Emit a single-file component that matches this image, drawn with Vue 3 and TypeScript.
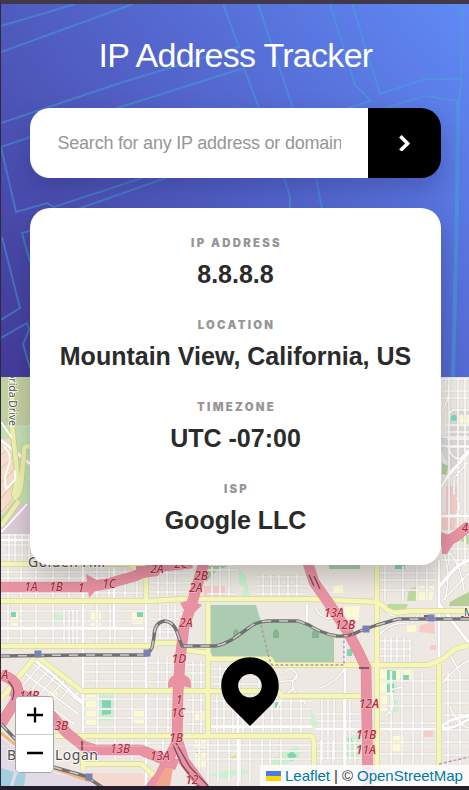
<script setup lang="ts">
import { ref } from 'vue'

interface Detail { label: string; value: string }
interface MapLabel { t: string; x: number; y: number }

const query = ref('')
const details: Detail[] = [
  { label: 'IP Address', value: '8.8.8.8' },
  { label: 'Location', value: 'Mountain View, California, US' },
  { label: 'Timezone', value: 'UTC -07:00' },
  { label: 'ISP', value: 'Google LLC' },
]

/* Streets of a rectangular block: verticals at xs, horizontals at ys */
const grid = (x0: number, y0: number, x1: number, y1: number, xs: number[], ys: number[]): string =>
  xs.map((x) => `M${x} ${y0}V${y1}`).join('') + ys.map((y) => `M${x0} ${y}H${x1}`).join('')

const streets: string = [
  grid(1, 534, 32, 563, [9, 15, 22, 29], [535, 545, 555]),
  grid(1, 567, 146, 600, [8, 21, 36, 53, 69, 97, 109, 125, 137], [572, 578, 593]),
  grid(1, 603, 146, 645, [8, 21, 36, 53, 97, 110], [611, 621, 629, 638]),
  grid(60, 610, 82, 645, [64, 69, 73, 77], [611, 638]),
  grid(113, 628, 175, 645, [115, 132, 146], [629, 638]),
  grid(83, 659, 146, 690, [97, 115, 132], [664, 672, 681]),
  grid(83, 694, 176, 733, [98, 115, 132, 146, 157, 168], [699, 709, 718, 727]),
  grid(84, 739, 176, 761, [97, 115, 132, 146, 163], [743, 756]),
  grid(150, 567, 190, 600, [158, 167, 175], [573, 583, 592]),
  grid(150, 604, 180, 638, [160, 168, 175], [611, 619, 632]),
  grid(148, 657, 175, 690, [158, 167], [663, 672, 682]),
  grid(186, 661, 208, 733, [193, 201], [665, 673, 682, 700, 712, 724]),
  grid(211, 665, 270, 689, [220, 229, 239, 259], [669, 677, 684]),
  grid(211, 694, 312, 733, [217, 224, 233, 243, 252, 263, 272, 281, 291, 301], [701, 709, 718, 726]),
  grid(188, 738, 311, 782, [199, 208, 218, 229, 240, 250, 262, 270, 281], [745, 751, 759]),
  grid(255, 575, 306, 600, [263, 271, 279, 288, 297], [577, 586, 594]),
  grid(207, 567, 236, 598, [212, 220, 229], [570, 594]),
  grid(316, 700, 361, 760, [322, 328, 334, 344, 350], [714, 721, 729, 743, 751]),
  grid(315, 740, 365, 786, [321, 333, 344, 355], [758, 766, 774]),
  grid(378, 637, 411, 663, [385, 391, 397, 404], [641, 649, 656]),
  grid(380, 671, 437, 764, [391, 402, 413, 422], [681, 694, 706, 723, 742, 754]),
  grid(378, 566, 435, 601, [385, 403, 417, 427], [573, 580, 590]),
  grid(443, 671, 469, 764, [448, 460], [680, 691, 703, 715, 730, 742, 755]),
  grid(441, 378, 469, 565, [449, 458, 465], [379, 391, 398, 437, 446, 549, 560]),
  grid(447, 420, 469, 451, [], [425, 432, 439, 447]),
  'M449 451V418Q449 409 456 410H469M442 412Q451 396 448 385M449 447Q450 458 460 459L469 449M449 472L462 460M455 477L468 462M454 480V495M456 516Q462 508 457 498',
  'M445 556Q451 576 445 600M450 553Q461 566 464 590M439 586Q453 565 469 559M442 601L469 573',
  'M284 673Q291 665 296 673T286 681L274 682M297 675Q285 687 306 704M293 689Q280 697 277 710M320 688Q339 681 345 667M386 715Q397 710 391 690L402 687M441 684Q457 666 469 660M449 653L460 673M450 707Q457 725 469 728',
  'M315 607Q321 621 337 618M383 607Q392 620 396 613M378 637Q390 621 407 624M410 666V639M412 623L423 608',
].join('')

const diagonals: string = [0, 1, 2, 3, 4, 5].map((i) => `M${3 + i * 14} ${709 - i * 2}L${42 + i * 8} ${663 + i * 5}`).join('')
  + [0, 1, 2, 3].map((i) => `M${31 - i * 8} ${662 + i * 10}L${82 - i * 4} ${704 + i * 10}`).join('')

const mainStreets = 'M83 567V733M146 603V786M114 567V628M345 640V786M439 560V662M439 375V535M1 628H144M315 729H440Q455 729 469 719M439 587L458 566L469 560M439 729Q449 718 469 716M238 664V786M307 605V663M211 727H312M82 702L50 672L35 660M439 490L448 476L469 452M439 516H469M439 604L469 643M1 440L30 464M1 540H31'

const majors: string[] = [
  'M1 564H135L149 566', 'M1 601H150L183 599H309L378 602L386 609Q393 614 402 612L413 611H469',
  'M1 646H150L158 643H181', 'M185 650L208 653L211 659H270L274 665H428L443 659L455 649L469 645',
  'M38 657L82 691H278L282 696H369', 'M55 736H312Q314 737 314 747V786', 'M83 737V770M83 764H141L160 781',
  'M35 657L17 679L1 699', 'M208 603V735', 'M377 565V786', 'M439 664V786', 'M146 600V579Q143 572 129 565',
]

const motorways = [
  'M1 587H87L107 584L135 576L155 567L192 563', 'M204 562L192 603L184 627L180 660L178 693L177 742L160 776L149 790',
  'M307 560L314 582L328 602L348 632L359 653L366 668L367 727L368 790', 'M1 675Q20 680 18 697L1 724',
  'M11 691L28 697L50 714L67 733L83 746L96 750H141L177 765', 'M178 742L184 761L204 788', 'M441 544L455 537L469 526',
]

const rails = [
  'M1 656L80 655H147L152 648L154 637Q154 623 164 621Q174 621 178 635L182 646H215Q223 645 233 639L250 627Q256 622 267 621H298L309 625Q320 633 337 636Q349 637 360 631L377 625L398 619H469',
  'M1 724L20 744L53 767L85 776L105 789',
]

const shields: MapLabel[] = [
  { t: '1A', x: 31, y: 591 }, { t: '1B', x: 56, y: 591 }, { t: '1', x: 81, y: 592 }, { t: '1C', x: 109, y: 588 },
  { t: '2A', x: 157, y: 573 }, { t: '2C', x: 181, y: 568 }, { t: '2B', x: 201, y: 580 }, { t: '2A', x: 196, y: 592 },
  { t: '2A', x: 186, y: 627 }, { t: '1D', x: 179, y: 663 }, { t: '1', x: 179, y: 704 }, { t: '1C', x: 178, y: 717 },
  { t: '1B', x: 176, y: 742 }, { t: '13A', x: 160, y: 760 }, { t: '12', x: 192, y: 784 }, { t: 'A', x: 5, y: 679 },
  { t: '14B', x: 29, y: 700 }, { t: '13B', x: 58, y: 730 }, { t: '13B', x: 120, y: 753 }, { t: '13A', x: 334, y: 617 },
  { t: '12B', x: 345, y: 629 }, { t: '12A', x: 369, y: 708 }, { t: '11B', x: 366, y: 739 }, { t: '11A', x: 366, y: 754 },
  { t: '4', x: 465, y: 532 },
]

const stations: [number, number][] = [[38, 654], [147, 653], [366, 629], [431, 618], [89, 777]]
</script>

<template>
  <main class="page">
    <header class="hero">
      <svg class="pattern" viewBox="1 4 468 373" aria-hidden="true">
        <g fill="none" stroke="#43a6d9" stroke-opacity=".48" stroke-width="2">
          <path d="M1 26L75 4M1 52L133 4M223 4L239 47L120 83L1 123M117 108L244 68L259 108" />
          <path d="M30 137L1 147L16 212L47 203L54 207L142 178M78 209L166 178M30 231L22 233L30 262M2 237L20 308L1 320M1 338L27 323L29 330L23 344L30 368" />
          <path d="M258 4L293 108M330 4L355 85L371 101L342 110M352 4L380 94L425 79H461M385 108L425 96L460 101M284 178L290 197V209M316 178L322 209M457 4L462 19L464 4" />
          <path d="M462 18L461 80L459 101" />
          <path d="M458 101L457 210L453 377" stroke-width="4" />
        </g>
      </svg>
      <div class="content">
        <h1>IP Address Tracker</h1>
        <form class="search" @submit.prevent>
          <div class="field"><input v-model="query" type="text" placeholder="Search for any IP address or domain" /></div>
          <button type="submit" aria-label="Search">
            <svg width="13.2" height="16.8" viewBox="0 0 11 14"><path d="M2 1l6 6-6 6" fill="none" stroke="#fff" stroke-width="3" /></svg>
          </button>
        </form>
        <dl class="card">
          <div v-for="d in details" :key="d.label" class="item">
            <dt>{{ d.label }}</dt>
            <dd>{{ d.value }}</dd>
          </div>
        </dl>
      </div>
    </header>

    <section class="map">
      <svg class="tiles" viewBox="1 377 468 409" aria-hidden="true">
        <rect x="1" y="377" width="468" height="409" fill="#ede9e2" />
        <path d="M449 411H469V450L452 472L441 450V436H449Z" fill="#dad8d8" />
        <path d="M1 377H31V535H1Z" fill="#c4dfb4" />
        <path d="M1 377H31V426H1Z" fill="#c2cfa1" />
        <path d="M1 440L10 438L17 448V497L1 516Z" fill="#f6ddc7" />
        <path d="M1 455L16 440M1 469L17 453M1 483L17 467M1 498L17 481M1 512L17 495" stroke="#efbba6" />
        <path d="M1 520L20 503L31 504V534H1Z" fill="#dccbd9" />
        <path d="M204 566H228L216 571L206 582Z" fill="#a8ce9c" />
        <path d="M239 567L246 577L250 598H241L245 588L239 583ZM54 614L66 616L63 620H56ZM98 695H113V721H98ZM272 703L284 700L280 710H273ZM272 758L298 746L301 758L283 765H272ZM311 709L319 725L311 727ZM347 736L361 735L358 759H346ZM391 700H398V712H391ZM385 679H397V696H385ZM208 775L231 770H248V773L225 778Z" fill="#c7f3cf" />
        <path d="M409 589L416 587V601H407ZM388 604H408L405 611L394 612L387 607ZM461 535H469V545L461 541Z" fill="#b9dc9c" />
        <path d="M450 602L459 597L469 592V606H449ZM442 463L449 466L446 475L442 474Z" fill="#b5cd98" />
        <path d="M11 612H18V627H11ZM91 612H101V626H91ZM132 611H143V624H132ZM86 695H98V725H86ZM133 711H144V723H133ZM195 713H204V720H195ZM195 740H206V748H195ZM195 753H206V767H195ZM334 586L343 585V593H333ZM416 586H434L432 600H416ZM344 607L360 606L358 620L353 622L344 614ZM380 670H413V680H380ZM380 681L387 681V711H380ZM391 736H404V751H391ZM458 415H469V425H458ZM407 626L416 625V632H407ZM48 691H57V700H48Z" fill="#fcfad5" />
        <path d="M203 586H225V598H205ZM420 625L434 622L435 634L419 632ZM430 645H436V650H430ZM424 731H433V737H424ZM446 486H457V509L455 530H442V514L446 512Z" fill="#f7cbc8" />
        <path d="M83 773H140L160 782V786H90L81 779Z" fill="#f3d9d0" />
        <path d="M1 738L25 755L56 774L84 779L94 786H1Z" fill="#e3dae7" />
        <path d="M1 768L14 772L10 786H1ZM17 774L27 766L24 786H13Z" fill="#a3cfdf" />
        <g fill="#80d4b5">
          <path d="M11 612H16V617H11ZM137 611H143V617H137ZM102 700L111 699L111 714L102 715ZM196 750H200V753H196ZM275 703L280 700L280 708L275 709ZM287 755L292 751L297 756L291 761ZM387 670L396 671V680H387ZM401 675H409V680H401ZM387 684H394V692H387ZM345 650L353 648L352 656H346ZM395 565H405V569H395ZM348 738H352V743H348Z" />
          <circle cx="454" cy="418" r="3" />
        </g>
        <path d="M230 757L236 755V760H228Z" fill="#f0e35a" />

        <g fill="none" stroke-linejoin="round">
          <path :d="streets + diagonals" stroke="#d3cfcb" stroke-width="2.7" />
          <path :d="mainStreets" stroke="#cfcbc8" stroke-width="4" />
          <path :d="streets + diagonals" stroke="#fcfcfb" stroke-width="1.6" />
          <path :d="mainStreets" stroke="#fff" stroke-width="2.9" />
          <path d="M210 605H256L261 622L274 620H298L316 628L334 637V663H272L268 658L210 657ZM329 565H360V569H329Z" fill="#abccb1" />
          <path d="M233 638V632Q236 626 239 632V638ZM273 638V632Q276 626 279 632V638ZM312 638V632Q316 626 319 632V638Z" fill="#85b491" />
          <path d="M12 377V425L18 480L15 500M30 447Q23 444 24 454L21 486Q18 500 14 494L17 480M19 501L1 526" stroke="#c7cd85" stroke-width="6" />
          <path d="M12 377V425L18 480L15 500M30 447Q23 444 24 454L21 486Q18 500 14 494L17 480M19 501L1 526" stroke="#edf0b1" stroke-width="4.5" />
          <path d="M1 422L12 438M4 447Q12 453 9 465Q3 478 6 489L15 480V470M27 504L8 525L1 532" stroke="#fff" stroke-width="1.8" />
          <path v-for="d in majors" :key="'c' + d" :d="d" stroke="#d6d6a4" stroke-width="5.8" />
          <path v-for="d in majors" :key="d" :d="d" stroke="#f5f6b8" stroke-width="4.6" />
          <path d="M261 625L269 658L272 665H344V638M439 764L469 757" stroke="#b293ad" stroke-width="1.4" stroke-dasharray="3 2" />
          <path v-for="d in motorways" :key="'m' + d" :d="d" stroke="#dd8396" stroke-width="10.6" />
          <path v-for="d in motorways" :key="'n' + d" :d="d" stroke="#e892a3" stroke-width="9.8" />
          <path d="M1 733Q22 751 46 766L90 781" stroke="#f4b477" stroke-width="3" />
          <path d="M173 745L182 765L201 789M176 743L190 767L211 789M8 681Q17 689 12 700M309 575L314 586M314 576L320 589" stroke="#7d4a58" stroke-width="1.3" />
          <path v-for="d in rails" :key="'r' + d" :d="d" stroke="#717171" stroke-width="3.4" />
          <path v-for="d in rails" :key="'s' + d" :d="d" stroke="#cdcdcd" stroke-width="1.5" stroke-dasharray="9 8" />
        </g>
        <path d="M156 786L164 777L170 786ZM155 786L165 768L173 768L170 786Z" fill="#f3a68f" />
        <path d="M86 574L102 583L89 598ZM180 603L190 600L202 605L194 613L190 624L185 612ZM441 532L449 535L456 534L454 543L447 554H442ZM136 566H164L158 576L136 579ZM174 675Q167 678 168 688L176 686ZM184 675Q192 677 191 688L182 686Z" fill="#e892a3" />
        <path d="M82 741V750M359 668H369M424 616H430M461 617H469M348 636L352 634" stroke="#8b5965" stroke-width="2" fill="none" />

        <g class="roads" text-anchor="middle">
          <text v-for="(s, i) in shields" :key="i" :x="s.x" :y="s.y">{{ s.t }}</text>
        </g>
        <rect v-for="[x, y] in stations" :key="x" :x="x - 3.5" :y="y - 3.5" width="7" height="7" fill="#7982b5" />
        <g class="places">
          <text x="28" y="567" textLength="77">Golden Hill</text>
          <text x="7" y="760" textLength="91">Barrio Logan</text>
          <text x="464" y="616" class="small">M</text>
          <text class="small" transform="translate(9 364) rotate(90)" textLength="62">Florida Drive</text>
        </g>
        <path d="M1 426H31M441 426H469M1 746H469" stroke="#fff" stroke-width=".6" stroke-opacity=".5" />
      </svg>
      <svg class="pin" viewBox="0 0 46 56" role="img" aria-label="Location">
        <path fill-rule="evenodd" d="M39.263 7.673c8.897 8.812 8.966 23.168.153 32.065l-.153.153L23 56 6.737 39.89C-2.16 31.079-2.23 16.723 6.584 7.826l.153-.152c9.007-8.922 23.52-8.922 32.526 0zM23 14.435c-5.211 0-9.436 4.185-9.436 9.347S17.79 33.128 23 33.128s9.436-4.184 9.436-9.346S28.211 14.435 23 14.435z" />
      </svg>
      <div class="zoom">
        <button type="button" aria-label="Zoom in"><svg viewBox="0 0 16 16"><path d="M0 8H16M8 .5V15.5" /></svg></button>
        <button type="button" aria-label="Zoom out"><svg viewBox="0 0 16 16"><path d="M0 8H16" /></svg></button>
      </div>
      <div class="attribution">
        <svg width="15" height="10" viewBox="0 0 15 10"><path fill="#4c7be1" d="M0 0h15v5H0z" /><path fill="#ffd500" d="M0 5h15v5H0z" /></svg>
        <a href="#">Leaflet</a><span>|</span><span>©</span><a href="#">OpenStreetMap</a>
      </div>
    </section>
  </main>
</template>

<style>
body { margin: 0; background: #241d2b; }
</style>

<style scoped>
.page {
  box-sizing: border-box;
  width: 469px;
  height: 790px;
  border-top: 4px solid #43384a;
  border-left: 1px solid #302936;
  border-bottom: 4px solid #241d2b;
  overflow: hidden;
  font-family: "Liberation Sans", Arial, sans-serif;
}
.hero {
  display: grid;
  height: 373px;
  position: relative;
  z-index: 2;
  background: linear-gradient(50deg, #433a99 0%, #4e57ba 35%, #556bd3 62%, #608af6 100%);
}
.pattern { grid-area: 1 / 1; width: 468px; height: 373px; }
.content { grid-area: 1 / 1; height: 373px; padding: 0 28px 0 29px; z-index: 1; }
h1 {
  margin: 0;
  padding-top: 31px;
  height: 73px;
  line-height: 40px;
  font-size: 34px;
  font-weight: 400;
  letter-spacing: -.7px;
  text-align: center;
  color: #fff;
}
.search {
  display: flex;
  height: 70px;
  border-radius: 20px;
  overflow: hidden;
  box-shadow: 0 12px 24px rgba(30, 25, 80, .26);
}
.field { flex: 1; padding: 0 27px 0 27.5px; background: #fff; display: flex; min-width: 0; }
input {
  width: 100%;
  padding: 0;
  border: 0;
  outline: 0;
  background: transparent;
  font: 18px "Liberation Sans", Arial, sans-serif;
  letter-spacing: -.22px;
}
input::placeholder { color: #969696; opacity: 1; }
.search button {
  width: 73px;
  padding: 0;
  border: 0;
  background: #000;
  display: grid;
  place-items: center;
}
.card {
  box-sizing: border-box;
  height: 357px;
  margin: 30px 0 0;
  padding: 27px 0 0;
  border-radius: 20px;
  background: #fff;
  box-shadow: 0 12px 24px rgba(0, 0, 0, .2);
  text-align: center;
}
.item { height: 82px; }
dt {
  padding-left: 2px;
  font: 900 11.3px/16px Inter, "Liberation Sans", sans-serif;
  letter-spacing: 2.3px;
  text-transform: uppercase;
  color: #969696;
}
dd {
  margin: 8px 0 0;
  font-size: 25px;
  line-height: 30px;
  font-weight: 700;
  white-space: nowrap;
  color: #2b2b2b;
}
.map { position: relative; height: 409px; overflow: hidden; }
.tiles { display: block; width: 468px; height: 409px; }
.roads text { font: italic 500 11.8px "Noto Sans", sans-serif; fill: #ad2c40; stroke: #f3c4ca; stroke-width: 1px; paint-order: stroke; }
.places text { font: 14px "Noto Sans", sans-serif; fill: #514f4f; stroke: #fff; stroke-opacity: .75; stroke-width: 2px; paint-order: stroke; }
.places .small { font-size: 10.5px; }
.pin { position: absolute; left: 220px; top: 279px; width: 58px; height: 70px; }
.zoom {
  position: absolute;
  left: 14px;
  top: 318.5px;
  width: 37px;
  border: 1px solid rgba(0, 0, 0, .35);
  border-radius: 5px;
  overflow: hidden;
  background: #fff;
}
.zoom button {
  display: grid;
  place-items: center;
  width: 38px;
  height: 37px;
  padding: 0;
  border: 0;
  background: #fff;
}
.zoom button + button { height: 38px; border-top: 1px solid #ccc; }
.zoom svg { width: 16px; height: 16px; stroke: #000; stroke-width: 2.3; fill: none; }
.attribution {
  position: absolute;
  right: 0;
  bottom: 0;
  box-sizing: border-box;
  width: 209px;
  height: 21px;
  padding: 0 5px 0 6px;
  display: flex;
  align-items: center;
  gap: 4px;
  background: rgba(255, 255, 255, .82);
  font-size: 15px;
  white-space: nowrap;
  color: #333;
}
.attribution a { color: #0078a8; text-decoration: none; }
</style>
